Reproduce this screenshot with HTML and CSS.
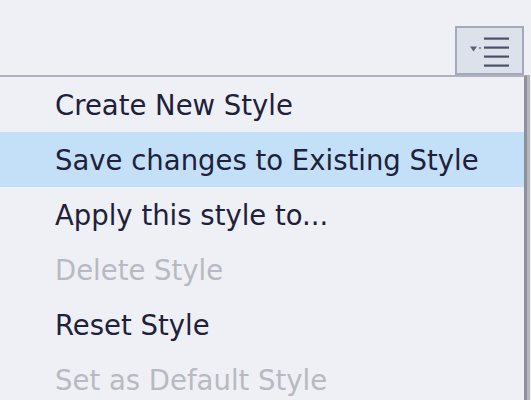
FILE: index.html
```html
<!DOCTYPE html>
<html>
<head>
<meta charset="utf-8">
<link rel="stylesheet" href="styles.css">
</head>
<body>
<div class="toolbar">
  <button class="menu-btn" type="button" aria-label="Style menu">
    <svg width="44" height="32" viewBox="0 0 44 32">
      <polygon points="0,11.5 7,11.5 3.5,16.5" fill="#5a6078"/>
      <rect x="9" y="12" width="2" height="2" fill="#8a90a4"/>
      <rect x="14" y="2.5" width="25" height="2.2" fill="#4a5068"/>
      <rect x="14" y="11.5" width="25" height="2.2" fill="#4a5068"/>
      <rect x="14" y="20.5" width="25" height="2.2" fill="#4a5068"/>
      <rect x="14" y="29.5" width="25" height="2.2" fill="#4a5068"/>
    </svg>
  </button>
</div>
<div class="menu">
  <div class="item">Create New Style</div>
  <div class="item active">Save changes to Existing Style</div>
  <div class="item">Apply this style to...</div>
  <div class="item disabled">Delete Style</div>
  <div class="item">Reset Style</div>
  <div class="item disabled">Set as Default Style</div>
</div>
</body>
</html>
```
FILE: styles.css
```css
html, body {
  margin: 0;
  padding: 0;
  background: #eff0f5;
  overflow: hidden;
}
body {
  width: 531px;
  height: 400px;
  font-family: "DejaVu Sans", Verdana, sans-serif;
}
.toolbar {
  display: flex;
  justify-content: flex-end;
  align-items: flex-start;
  padding: 26px 7px 0 0;
  height: 75px;
  box-sizing: border-box;
}
.menu-btn {
  width: 69px;
  height: 49px;
  box-sizing: border-box;
  border: 2px solid #a3a8ba;
  background: #dde1ec;
  padding: 0;
  display: flex;
  align-items: center;
  justify-content: center;
}
.menu-btn svg {
  display: block;
  margin-left: 4px;
}
.menu {
  margin-left: -3px;
  width: 530px;
  box-sizing: border-box;
  border-top: 2px solid #b0b3be;
  border-right: 3px solid #8e909c;
  box-shadow: 3px 0 0 #b4b6bf;
  background: #eff0f5;
  height: 330px;
}
.item {
  height: 55px;
  display: flex;
  align-items: center;
  padding-left: 58px;
  font-size: 27.5px;
  color: #20203a;
  white-space: nowrap;
}
.item.active {
  background: #c4e0f8;
}
.item.disabled {
  color: #b8b9c2;
}
```
